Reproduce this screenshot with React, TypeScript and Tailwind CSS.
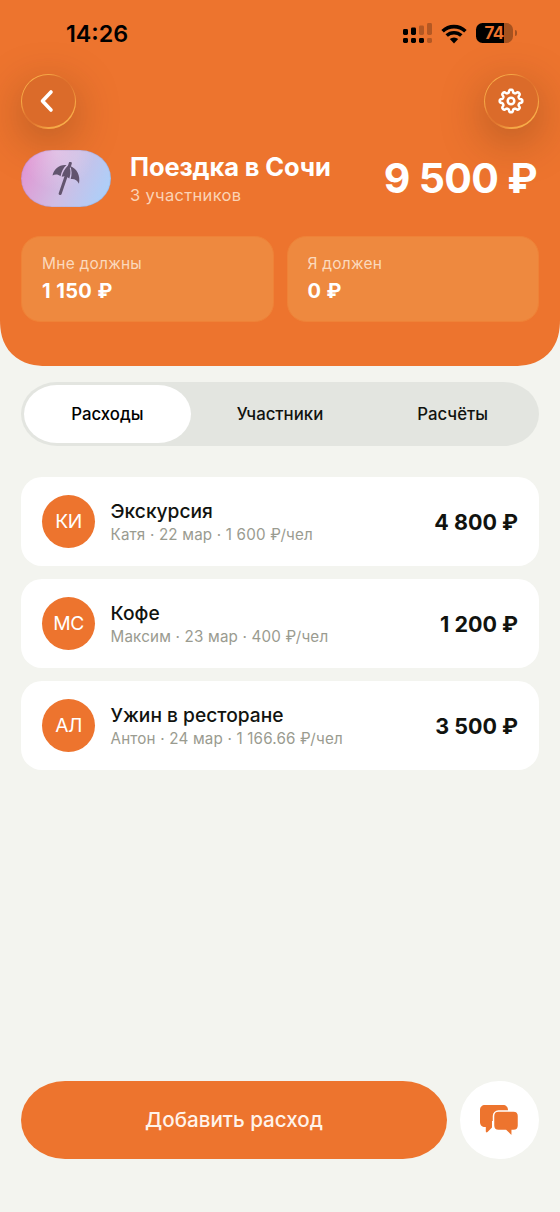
import { useState } from "react";

type Expense = { id: number; initials: string; title: string; meta: string; amount: string };

const EXPENSES: Expense[] = [
  { id: 1, initials: "КИ", title: "Экскурсия", meta: "Катя · 22 мар · 1 600 ₽/чел", amount: "4 800 ₽" },
  { id: 2, initials: "МС", title: "Кофе", meta: "Максим · 23 мар · 400 ₽/чел", amount: "1 200 ₽" },
  { id: 3, initials: "АЛ", title: "Ужин в ресторане", meta: "Антон · 24 мар · 1 166.66 ₽/чел", amount: "3 500 ₽" },
];

const TABS = ["Расходы", "Участники", "Расчёты"];

// Gear outline: eight rounded teeth around (13, 13)
const GEAR_POINTS = Array.from({ length: 144 }, (_, i) => {
  const a = (i / 144) * Math.PI * 2;
  const r = 9.9 + 1.5 * Math.tanh(1.8 * Math.cos(8 * a));
  return `${(13 + r * Math.cos(a)).toFixed(2)},${(13 + r * Math.sin(a)).toFixed(2)}`;
}).join(" ");

export default function App() {
  const [tab, setTab] = useState(TABS[0]);

  return (
    <div className="flex h-[1212px] w-[560px] flex-col overflow-hidden bg-[#f3f4ef] font-['Inter','Liberation_Sans',sans-serif] text-[#11130f]">
      <header className="h-[366px] shrink-0 overflow-hidden rounded-b-[46px] bg-[#ed742e] text-white [corner-shape:superellipse(1.2)]">
        <StatusBar />

        <div className="mt-[5.5px] flex justify-between px-[21px]">
          <GlassButton label="Назад">
            <svg width="16" height="24" viewBox="0 0 16 24" fill="none" className="mr-[3px]">
              <path d="M12 3 3.5 12 12 21" stroke="white" strokeWidth="3.6" strokeLinecap="round" strokeLinejoin="round" />
            </svg>
          </GlassButton>
          <GlassButton label="Настройки">
            <GearIcon />
          </GlassButton>
        </div>

        <div className="relative mt-[21px] flex h-[57px] items-center px-[21px]">
          <div className="flex h-[57px] w-[90px] shrink-0 items-center justify-center rounded-[31px/28.5px] bg-[radial-gradient(ellipse_at_40%_0%,rgba(255,255,255,.28),transparent_50%),linear-gradient(115deg,#e293d2_5%,#cfbde4_50%,#a9d1fb_95%)] pt-px shadow-[inset_0_0_1px_rgba(60,60,120,.7)]">
            <UmbrellaIcon />
          </div>
          <div className="ml-[19px] grow pt-[2px]">
            <h1 className="text-[25.5px] leading-[30px] font-bold tracking-[-.005em] whitespace-nowrap">Поездка в Сочи</h1>
            <p className="mt-[2px] text-[16.5px] leading-[23px] tracking-[.02em] text-[#fbd3b5]">3 участников</p>
          </div>
          <div className="mr-[2px] text-[41px] leading-[50px] font-bold tracking-[-.016em] whitespace-nowrap">9 500 ₽</div>
        </div>

        <div className="relative mt-[29px] flex gap-[13px] px-[21px]">
          <Balance label="Мне должны" value="1 150 ₽" />
          <Balance label="Я должен" value="0 ₽" />
        </div>
      </header>

      <nav className="mx-[21px] mt-4 grid h-16 shrink-0 grid-cols-3 items-center rounded-[36px/32px] bg-[#e3e5e0]">
        {TABS.map(t => (
          <button
            key={t}
            onClick={() => setTab(t)}
            className={`mx-[3px] h-[58px] rounded-[33px/29px] pt-[2px] text-[16.8px] font-medium ${
              t === tab ? "bg-white text-black" : ""
            }`}
          >
            {t}
          </button>
        ))}
      </nav>

      <main className="mx-[21px] mt-[31px] flex grow flex-col gap-[13.5px]">
        {EXPENSES.map(e => (
          <ExpenseRow key={e.id} expense={e} />
        ))}
      </main>

      <footer className="mb-[53px] flex gap-[13px] px-[21px]">
        <button className="h-[78px] w-[426px] rounded-[44px/39px] bg-[#ed742e] pt-[2px] text-[20.6px] font-medium text-[#fff3ea]">
          Добавить расход
        </button>
        <button aria-label="Чат" className="flex size-[78.5px] items-center justify-center rounded-full bg-white pr-px">
          <ChatIcon />
        </button>
      </footer>
    </div>
  );
}

function StatusBar() {
  return (
    <div className="flex h-[68px] items-center justify-between pr-[43px] pl-[66px] text-black">
      <span className="text-[23.3px] font-semibold">14:26</span>
      <div className="flex items-center">
        <svg width="30" height="22" viewBox="0 0 30 22">
          <rect x="0" y="6" width="5" height="6" rx="1.4" />
          <rect x="8" y="4.5" width="5" height="7.5" rx="1.4" />
          <rect x="16" y="2.5" width="5" height="9.5" rx="1.4" opacity=".24" />
          <rect x="24" y="0" width="5" height="12" rx="1.4" opacity=".24" />
          <rect x="0" y="15" width="5" height="5" rx="1.4" />
          <rect x="8" y="15" width="5" height="5" rx="1.4" />
          <rect x="16" y="15" width="5" height="5" rx="1.4" />
          <rect x="24" y="15" width="5" height="5" rx="1.4" opacity=".24" />
        </svg>
        <svg width="26" height="20" viewBox="0 0 26 20" fill="none" stroke="black" className="mb-px ml-2">
          <path d="M1.6 7.2a16.4 16.4 0 0 1 22.8 0" strokeWidth="3.6" />
          <path d="M5.7 11.6a10.6 10.6 0 0 1 14.6 0" strokeWidth="3.5" />
          <path d="M13 19.4l4.2-4.3a6 6 0 0 0-8.4 0z" fill="black" stroke="none" />
        </svg>
        <div className="mb-[2px] ml-[9px] flex items-center">
          <div className="flex h-5 w-[37px] items-center justify-center rounded-[6.5px] bg-[linear-gradient(90deg,black_76%,#a6521f_76%)] pr-px text-[17px] leading-5 font-bold tracking-[-.04em] text-[#ed742e]">
            74
          </div>
          <div className="ml-[1.5px] h-[6px] w-[2.5px] rounded-r-full bg-[#a6521f]" />
        </div>
      </div>
    </div>
  );
}

function GlassButton({ label, children }: { label: string; children: React.ReactNode }) {
  return (
    <button
      aria-label={label}
      className="size-[55px] rounded-full bg-[linear-gradient(135deg,#f9b24c_10%,#f3a544_28%,#e0762f_42%,#e0762f_55%,#f4a745_75%,#f9b24c_90%)] p-[1.3px] shadow-[0_12px_44px_rgba(70,40,15,.34)]"
    >
      <span className="flex size-full items-center justify-center rounded-full bg-[#db6b2a]">{children}</span>
    </button>
  );
}

function Balance({ label, value }: { label: string; value: string }) {
  return (
    <div className="h-[86px] flex-1 rounded-[19px] border border-[#ef8237] bg-[#ee893f] px-5 pt-[17px]">
      <p className="text-[15.5px] leading-5 tracking-[.015em] text-[#fbd9bd]">{label}</p>
      <p className="mt-[5px] text-[20px] leading-6 font-bold tracking-[.02em]">{value}</p>
    </div>
  );
}

function ExpenseRow({ expense }: { expense: Expense }) {
  return (
    <div className="flex h-[88.5px] items-center rounded-[21px] bg-white px-[21px]">
      <div className="flex size-[53px] items-center justify-center rounded-full bg-[#ed742e] text-[19.3px] tracking-[-.03em] text-white">
        {expense.initials}
      </div>
      <div className="ml-[15.5px] grow pt-[2px]">
        <p className="text-[19.2px] leading-6 font-medium">{expense.title}</p>
        <p className="pt-px text-[15.2px] leading-[22px] tracking-[.012em] text-[#9a9b90]">{expense.meta}</p>
      </div>
      <div className="pt-px text-[21.5px] font-bold">{expense.amount}</div>
    </div>
  );
}

function GearIcon() {
  return (
    <svg width="26" height="26" viewBox="0 0 26 26" fill="none" stroke="white" strokeWidth="2.5" strokeLinejoin="round" className="mr-px">
      <polygon points={GEAR_POINTS} />
      <circle cx="13" cy="13" r="3.3" />
    </svg>
  );
}

function UmbrellaIcon() {
  return (
    <svg width="30" height="34" viewBox="0 0 30 34" fill="#62546e">
      <path d="M15.5 3C8.5 2.2 3 6.5 1.5 13.5c2.8-1.6 5.8-1.2 8 .7C10.5 9.8 12.3 5.8 15.5 3Z" />
      <path d="M17.4 3.2c-3.5 3-5.700 7-6.700 11.600 3-1.300 5.600-.4 7.600 1.800C20 11.500 20 7 17.400 3.200Z" />
      <path d="M19.2 4c6.8 2.500 10.300 9.500 8.800 17.800-1.700-3.600-4.400-5.200-8.300-4.700 1.300-4.600 1.200-8.800-.5-13.100Z" />
      <path d="m19.3 1.3-1 3.2M15 14.5 9.2 31.5" fill="none" stroke="#62546e" strokeWidth="3" strokeLinecap="round" />
    </svg>
  );
}

function ChatIcon() {
  return (
    <svg width="40" height="32" viewBox="0 0 40 32" fill="#ed742e">
      <path d="M6 1h18c3 0 5 2 5 5v11H13v6.5L8.5 28c-.8.8-1.7.4-1.7-.7V23H6c-3 0-5-2-5-5V6c0-3 2-5 5-5Z" />
      <path
        d="M19.5 7h15c2.800 0 5 2.200 5 5v9.500c0 2.800-2.200 5-5 5h-1.300v3.700c0 1.200-1 1.600-1.800.8L26.800 26.500h-7.300c-2.800 0-5-2.200-5-5V12c0-2.800 2.200-5 5-5Z"
        stroke="white"
        strokeWidth="1.5"
      />
    </svg>
  );
}
